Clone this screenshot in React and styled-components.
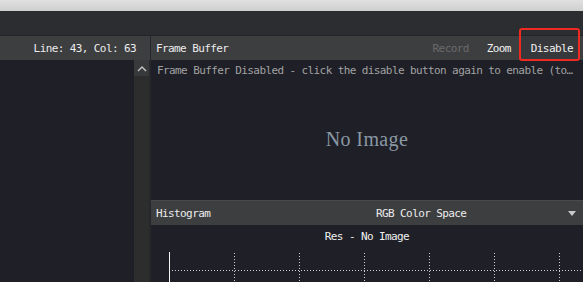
import React from 'react';
import styled, { createGlobalStyle } from 'styled-components';

const GlobalStyle = createGlobalStyle`
  html, body, #root {
    margin: 0;
    padding: 0;
    height: 100%;
  }
  body {
    background: #1e1f27;
    font-family: "DejaVu Sans Mono", "Liberation Mono", monospace;
    font-size: 11px;
    letter-spacing: -0.6px;
    color: #ececec;
    overflow: hidden;
  }
`;

const Window = styled.div`
  display: flex;
  flex-direction: column;
  height: 100vh;
  overflow: hidden;
`;

const TopStrip = styled.div`
  height: 11px;
  background: linear-gradient(#e0e0e0, #cfcfcf);
`;

const TitleBar = styled.div`
  height: 24px;
  background: #2c2d30;
  border-bottom: 1px solid #232427;
`;

const Main = styled.div`
  flex: 1;
  display: flex;
  min-height: 0;
`;

const LeftPane = styled.div`
  width: 150px;
  display: flex;
  flex-direction: column;
  border-right: 1px solid #26272a;
`;

const Header = styled.div`
  height: 24px;
  flex-shrink: 0;
  display: flex;
  align-items: center;
  justify-content: ${p => (p.$align === 'right' ? 'flex-end' : 'flex-start')};
  padding: ${p => (p.$align === 'right' ? '0 14px 0 0' : '0 0 0 5px')};
  background: #3d3e40;
  white-space: nowrap;
`;

const LeftBody = styled.div`
  flex: 1;
  display: flex;
`;

const Editor = styled.div`
  flex: 1;
  background: #1e1f27;
`;

const ScrollBar = styled.div`
  width: 16px;
  display: flex;
  flex-direction: column;
  background: #2d2d2e;
  border-right: 1px solid #27282a;
  box-sizing: border-box;
`;

const ScrollButton = styled.div`
  height: 16px;
  display: flex;
  align-items: center;
  justify-content: center;
  background: #38393a;
`;

const RightPane = styled.div`
  flex: 1;
  display: flex;
  flex-direction: column;
  min-width: 0;
`;

const Spacer = styled.div`
  flex: 1;
`;

const ToolButton = styled.div`
  position: relative;
  height: 24px;
  display: flex;
  align-items: center;
  padding: ${p => (p.$active ? '0 7px 0 11px' : '0 9px')};
  margin-right: ${p => (p.$active ? '3px' : '0')};
  color: ${p => (p.$disabled ? '#6b6b6b' : '#f2f2f2')};
  background: ${p => (p.$active ? '#37383b' : 'transparent')};
`;

const Highlight = styled.span`
  position: absolute;
  top: -8px;
  bottom: -1px;
  left: -1px;
  right: 0;
  border: 2px solid #ee2a22;
  border-radius: 3px;
  pointer-events: none;
`;

const FrameBody = styled.div`
  height: 137px;
  display: flex;
  flex-direction: column;
  background: #1e1f27;
`;

const Notice = styled.div`
  padding: 4px 0 0 6px;
  height: 12px;
  color: #a2a2a2;
  white-space: nowrap;
`;

const NoImage = styled.div`
  flex: 1;
  display: flex;
  align-items: center;
  justify-content: center;
  padding-top: 6px;
  font-family: "Liberation Serif", "DejaVu Serif", serif;
  font-size: 20px;
  letter-spacing: 0.4px;
  color: #8a97a4;
`;

const HistHeader = styled.div`
  height: 25px;
  flex-shrink: 0;
  display: grid;
  grid-template-columns: 220px 1fr auto;
  align-items: center;
  padding: 0 6px 0 5px;
  margin-top: 3px;
  background: #3d3e40;
  border-top: 1px solid #48494b;
  box-sizing: border-box;
`;

const Arrow = styled.div`
  width: 0;
  height: 0;
  border-left: 4px solid transparent;
  border-right: 4px solid transparent;
  border-top: 5px solid #c9c9c9;
  margin-right: 1px;
`;

const HistBody = styled.div`
  flex: 1;
  display: flex;
  flex-direction: column;
  background: #1e1f27;
  min-height: 0;
`;

const ResLine = styled.div`
  height: 20px;
  display: flex;
  align-items: center;
  justify-content: center;
  padding-top: 1px;
  color: #f0f0f0;
`;

const Plot = styled.svg`
  flex: 1;
  width: 100%;
  display: block;
`;

const gridX = [83, 148, 213, 278, 343, 408];

function Histogram() {
  return (
    <Plot>
      <line x1="18.5" y1="6" x2="18.5" y2="60" stroke="#f4f4f4" strokeWidth="1" />
      <line x1="21" y1="24.5" x2="432" y2="24.5" stroke="#cfcfcf" strokeWidth="1" strokeDasharray="1 2" />
      {gridX.map(x => (
        <line key={x} x1={x + 0.5} y1="7" x2={x + 0.5} y2="60" stroke="#cfcfcf" strokeWidth="1" strokeDasharray="1 2" />
      ))}
    </Plot>
  );
}

export default function App() {
  return (
    <Window>
      <GlobalStyle />
      <TopStrip />
      <TitleBar />
      <Main>
        <LeftPane>
          <Header $align="right">Line: 43, Col: 63</Header>
          <LeftBody>
            <Editor />
            <ScrollBar>
              <ScrollButton>
                <svg width="10" height="7" viewBox="0 0 10 7">
                  <path d="M1 6 L5 2 L9 6" fill="none" stroke="#c4c4c4" strokeWidth="1.4" />
                </svg>
              </ScrollButton>
            </ScrollBar>
          </LeftBody>
        </LeftPane>
        <RightPane>
          <Header>
            Frame Buffer
            <Spacer />
            <ToolButton $disabled>Record</ToolButton>
            <ToolButton>Zoom</ToolButton>
            <ToolButton $active>
              Disable
              <Highlight />
            </ToolButton>
          </Header>
          <FrameBody>
            <Notice>Frame Buffer Disabled - click the disable button again to enable (to…</Notice>
            <NoImage>No Image</NoImage>
          </FrameBody>
          <HistHeader>
            <span>Histogram</span>
            <span>RGB Color Space</span>
            <Arrow />
          </HistHeader>
          <HistBody>
            <ResLine>Res - No Image</ResLine>
            <Histogram />
          </HistBody>
        </RightPane>
      </Main>
    </Window>
  );
}
